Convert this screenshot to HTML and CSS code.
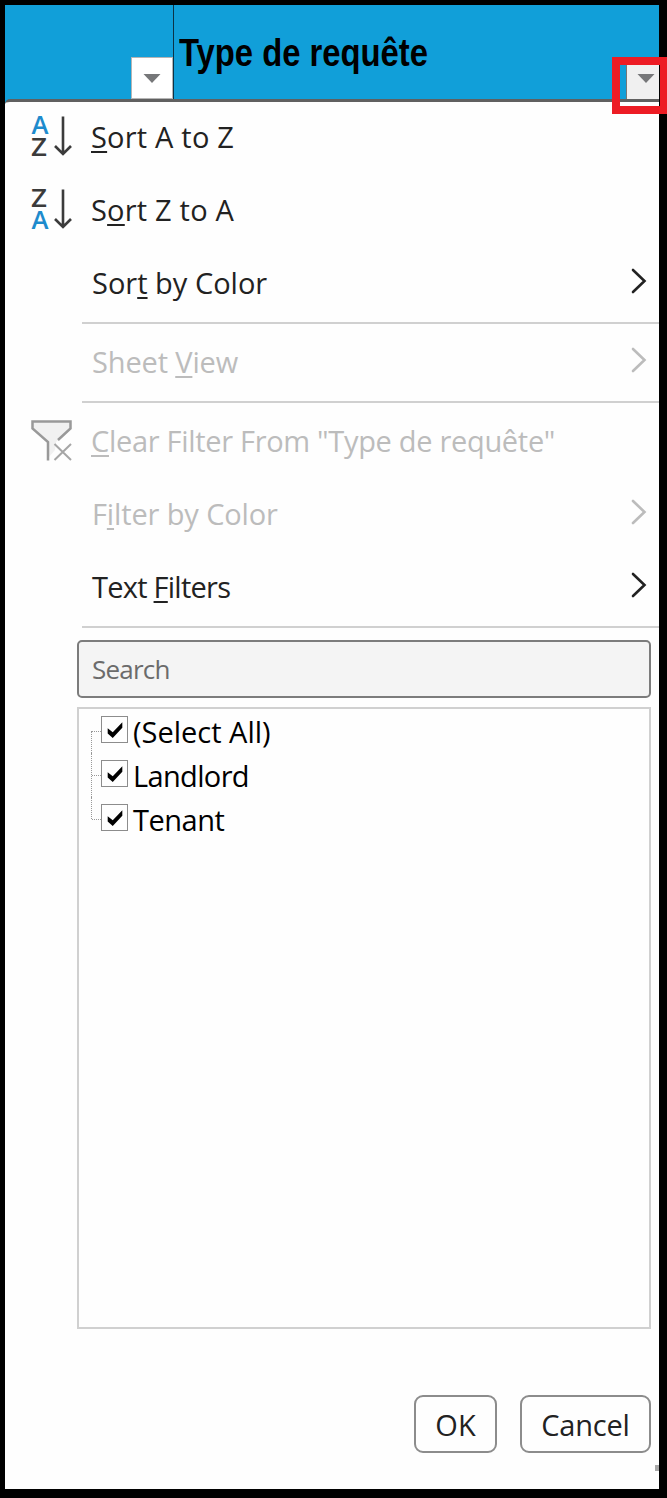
FILE: index.html
```html
<!DOCTYPE html>
<html lang="fr">
<head>
    <meta charset="UTF-8">
    <meta name="viewport" content="width=device-width, initial-scale=1.0">
    <title>Type de requête</title>
    <link rel="stylesheet" href="styles.css">
</head>
<body>
    <div class="sheet">
        <div class="header">
            <div class="cell cell-first">
                <button class="filter-btn" type="button">
                    <svg width="18" height="9" viewBox="0 0 18 9"><path d="M0.5 0h17L9 9z" fill="#767779"/></svg>
                </button>
            </div>
            <div class="cell cell-type">
                <span class="title">Type de requête</span>
                <button class="filter-btn active" type="button">
                    <svg width="18" height="9" viewBox="0 0 18 9"><path d="M0.5 0h17L9 9z" fill="#767779"/></svg>
                </button>
            </div>
        </div>

        <div class="menu">
            <div class="item">
                <svg class="icon" width="42" height="42" viewBox="0 0 42 42">
                    <text class="letter blue" x="0.5" y="18" textLength="17" lengthAdjust="spacingAndGlyphs">A</text>
                    <text class="letter" x="0" y="40" textLength="16" lengthAdjust="spacingAndGlyphs">Z</text>
                    <path class="arrow" d="M32 0.500v37.500M24 30l8 8 8-8"/>
                </svg>
                <span class="label sort"><u>S</u>ort A to Z</span>
            </div>
            <div class="item">
                <svg class="icon" width="42" height="42" viewBox="0 0 42 42">
                    <text class="letter" x="0" y="18" textLength="16" lengthAdjust="spacingAndGlyphs">Z</text>
                    <text class="letter blue" x="0.5" y="40" textLength="17" lengthAdjust="spacingAndGlyphs">A</text>
                    <path class="arrow" d="M32 0.500v37.500M24 30l8 8 8-8"/>
                </svg>
                <span class="label sort">S<u>o</u>rt Z to A</span>
            </div>
            <div class="item">
                <span class="label">Sor<u>t</u> by Color</span>
                <svg class="chevron" width="16" height="26" viewBox="0 0 16 26"><path d="M2 2l11.500 11L2 24"/></svg>
            </div>
            <div class="separator"></div>
            <div class="item disabled">
                <span class="label view">Sheet <u>V</u>iew</span>
                <svg class="chevron" width="16" height="26" viewBox="0 0 16 26"><path d="M2 2l11.500 11L2 24"/></svg>
            </div>
            <div class="separator"></div>
            <div class="item disabled">
                <svg class="icon" width="42" height="42" viewBox="0 0 42 42">
                    <path d="M1 1.500h38.500v7L25 22l-1 8-7 8V22L1 8.500z" fill="#f1f1f1"/>
                    <path d="M17 40.500V22L1.500 8.500v-7h38v7L27 20" fill="none" stroke="#999" stroke-width="2.500"/>
                    <path d="M23.500 24l16.500 16M40 24L23.500 40" fill="none" stroke="#a6a6a6" stroke-width="2"/>
                </svg>
                <span class="label clear"><u>C</u>lear Filter From "Type de requête"</span>
            </div>
            <div class="item disabled">
                <span class="label filter-color">F<u>i</u>lter by Color</span>
                <svg class="chevron" width="16" height="26" viewBox="0 0 16 26"><path d="M2 2l11.500 11L2 24"/></svg>
            </div>
            <div class="item">
                <span class="label text-filters">Text <u>F</u>ilters</span>
                <svg class="chevron" width="16" height="26" viewBox="0 0 16 26"><path d="M2 2l11.500 11L2 24"/></svg>
            </div>
            <div class="separator"></div>

            <div class="search">Search</div>

            <div class="list">
                <div class="option first">
                    <span class="branch"></span>
                    <span class="check"><svg width="18" height="18" viewBox="0 0 14 16"><path d="M0.500 6.500v4.500l4.500 4 8.500-9V1L5 10z"/></svg></span>
                    <span class="name">(Select All)</span>
                </div>
                <div class="option">
                    <span class="branch"></span>
                    <span class="check"><svg width="18" height="18" viewBox="0 0 14 16"><path d="M0.500 6.500v4.500l4.500 4 8.500-9V1L5 10z"/></svg></span>
                    <span class="name landlord">Landlord</span>
                </div>
                <div class="option last">
                    <span class="branch"></span>
                    <span class="check"><svg width="18" height="18" viewBox="0 0 14 16"><path d="M0.500 6.500v4.500l4.500 4 8.500-9V1L5 10z"/></svg></span>
                    <span class="name tenant">Tenant</span>
                </div>
            </div>

            <div class="buttons">
                <button class="btn ok" type="button">OK</button>
                <button class="btn cancel" type="button">Cancel</button>
            </div>
            <div class="grip"></div>
        </div>
    </div>
    <div class="highlight"></div>
</body>
</html>
```

FILE: styles.css
```css
* {
    box-sizing: border-box;
}

body {
    position: relative;
    margin: 0;
    width: 667px;
    height: 1498px;
    padding: 5px 8px 9px 5px;
    overflow: hidden;
    background-color: #000;
    font-family: "Open Sans", "Noto Sans", sans-serif;
    color: #222;
}

button {
    padding: 0;
    margin: 0;
    font-family: inherit;
    color: inherit;
}

svg {
    display: block;
    flex: none;
}

.sheet {
    display: flex;
    flex-direction: column;
    height: 1484px;
    background-color: #119fd9;
}

/* blue header cells */
.header {
    display: flex;
    height: 94px;
}

.cell {
    display: flex;
    justify-content: flex-end;
    align-items: flex-end;
}

.cell-first {
    width: 169px;
    border-right: 1px solid #0b3346;
}

.cell-type {
    flex: 1;
    justify-content: space-between;
}

.title {
    align-self: flex-start;
    margin: 24px 0 0 5px;
    font: bold 39.5px/46px "Liberation Sans", Arial, sans-serif;
    color: #000;
    white-space: nowrap;
    transform: scaleX(0.83);
    transform-origin: left;
}

.filter-btn {
    display: flex;
    justify-content: center;
    align-items: center;
    width: 42px;
    height: 42px;
    border: 1px solid #b5b5b5;
    background-color: #fff;
}

.filter-btn.active {
    justify-content: flex-start;
    width: 33px;
    padding-left: 10px;
    border: 0;
    border-left: 1px solid #777;
    background-color: #f0f0f0;
}

/* dropdown menu */
.menu {
    flex: 1;
    border-top: 3px solid #606060;
    border-top-left-radius: 5px;
    background-color: #fefefe;
}

.item {
    display: flex;
    align-items: center;
    height: 73px;
    padding: 0 12px 0 87px;
}

.icon {
    margin: -4px 18px 0 -61px;
    overflow: visible;
}

.letter {
    font-size: 25px;
    font-weight: 600;
    fill: #3b3b3b;
}

.letter.blue {
    fill: #1e8bcd;
}

.arrow {
    fill: none;
    stroke: #3b3b3b;
    stroke-width: 2.6;
}

.label {
    margin-top: -3px;
    font-size: 29px;
    line-height: 40px;
    white-space: nowrap;
}

.label u {
    text-decoration-thickness: 2px;
    text-underline-offset: 3px;
    text-decoration-skip-ink: none;
}

/* nudge the tracking to Segoe UI widths */
.sort {
    letter-spacing: 0.2px;
}

.view {
    letter-spacing: -0.15px;
}

.clear {
    letter-spacing: -0.31px;
}

.filter-color {
    letter-spacing: -0.13px;
}

.text-filters {
    letter-spacing: -0.75px;
}

.chevron {
    margin: -8px 0 0 auto;
    fill: none;
    stroke: #222;
    stroke-width: 2.6;
    stroke-linecap: round;
}

.disabled {
    color: #bcbcbc;
}

.disabled .chevron {
    stroke: #bcbcbc;
}

.separator {
    height: 2px;
    margin: 1px 0 3px 77px;
    background-color: #d0d0d0;
}

.search {
    display: flex;
    align-items: center;
    height: 58px;
    margin: 12px 8px 0 72px;
    padding-left: 13px;
    border: 2px solid #7c7c7c;
    border-radius: 5px;
    background-color: #f4f4f4;
    font-size: 26px;
    letter-spacing: -0.8px;
    color: #6b6b6b;
}

.list {
    height: 622px;
    margin: 9px 8px 0 72px;
    border: 2px solid #d0d0d0;
    padding-left: 12px;
    color: #000;
}

.option {
    display: flex;
    height: 44px;
    border-left: 1px dotted #999;
}

.option.first {
    height: 22px;
    margin-top: 22px;
}

.option.last {
    height: 22px;
}

.branch {
    width: 9px;
    height: 1px;
    margin-top: 22px;
    border-top: 1px dotted #999;
}

.first .branch {
    margin-top: 0;
}

.check {
    display: flex;
    justify-content: center;
    align-items: center;
    width: 27px;
    height: 27px;
    margin-top: 7px;
    border: 1px solid #8c8c8c;
}

.name {
    margin: 1px 0 0 5px;
    font-size: 29px;
    line-height: 44px;
    white-space: nowrap;
}

.landlord {
    letter-spacing: -0.65px;
}

.tenant {
    letter-spacing: -0.5px;
}

.first .check {
    margin-top: -15px;
}

.first .name {
    margin-top: -21px;
}

.buttons {
    display: flex;
    justify-content: flex-end;
    gap: 23px;
    margin: 66px 8px 0 0;
}

.btn {
    height: 58px;
    border: 2px solid #8c8c8c;
    border-radius: 9px;
    background-color: #fefefe;
    font-size: 29px;
}

.ok {
    width: 83px;
}

.cancel {
    width: 131px;
    letter-spacing: -0.2px;
}

.grip {
    width: 4px;
    height: 6px;
    margin: 12px 0 0 auto;
    background-color: #a8a8a8;
}

/* red box around the open filter button */
.highlight {
    position: absolute;
    left: 612px;
    top: 57px;
    width: 56px;
    height: 57px;
    border: 8px solid #ed1c24;
}
```
